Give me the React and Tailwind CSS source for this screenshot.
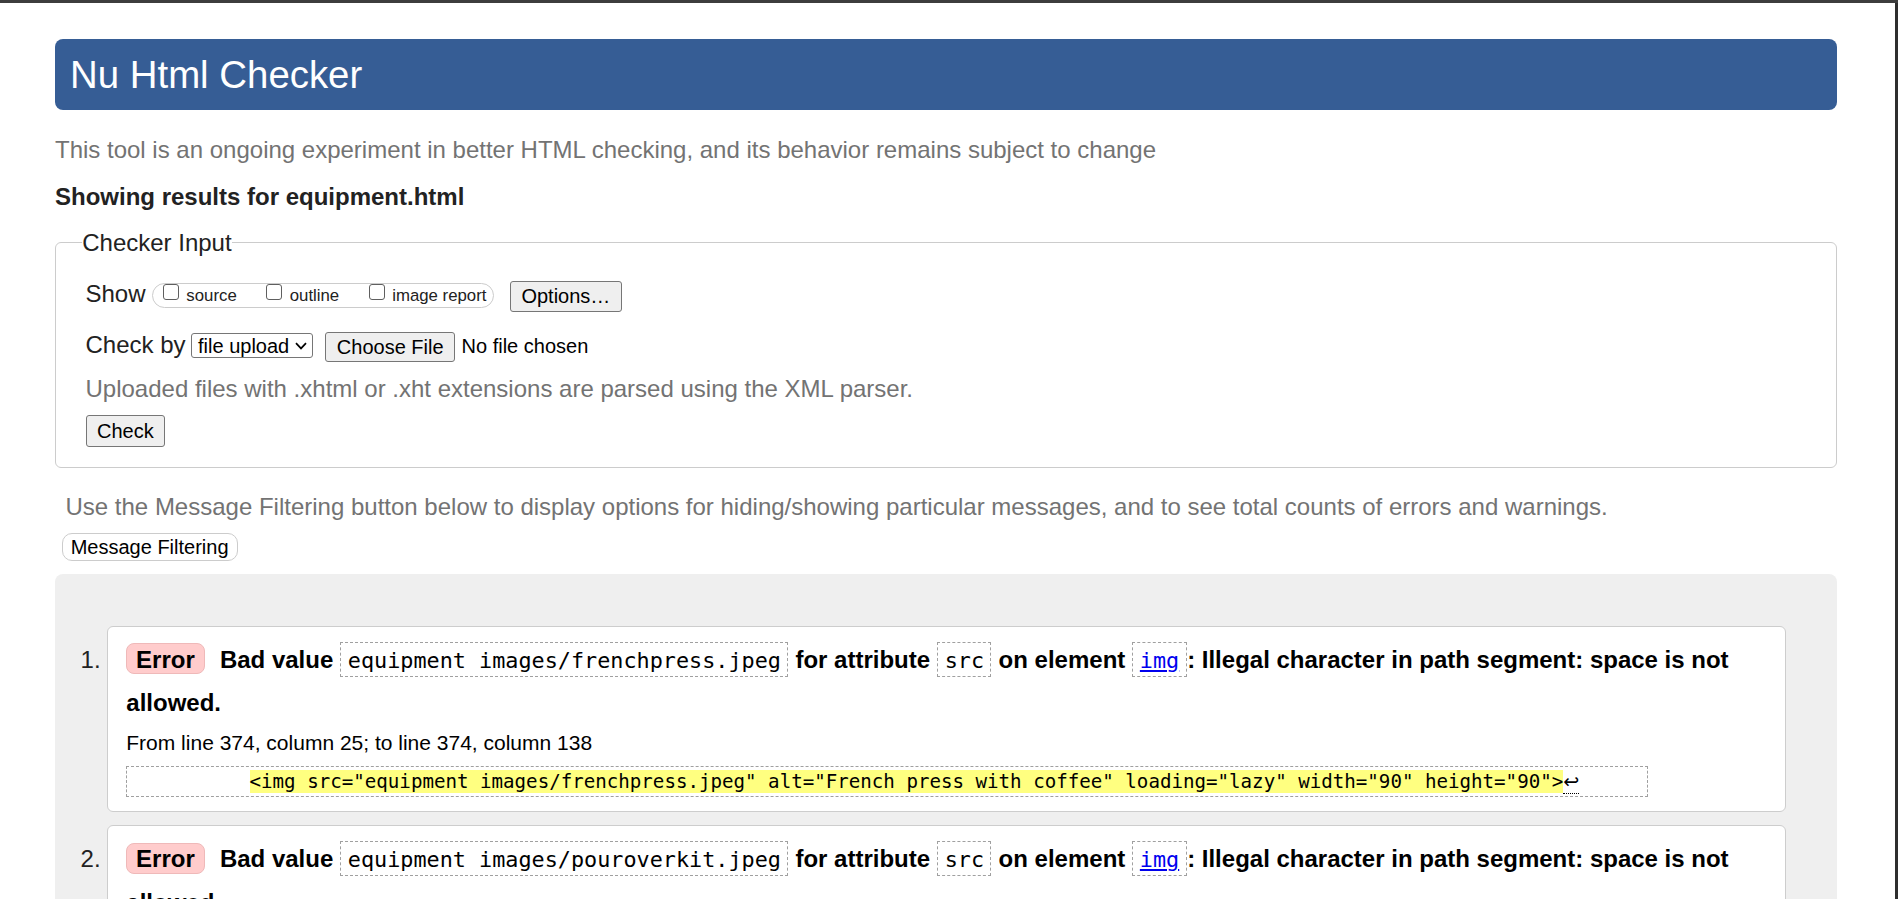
import React from 'react';

const Btn = ({ children, className = '' }) => (
  <button
    type="button"
    className={`flex items-center justify-center px-[10.5px] bg-[#efefef] border border-[#767676] rounded-[3px] text-[20px] leading-none text-black ${className}`}
  >
    {children}
  </button>
);

const Checkbox = ({ className = '' }) => (
  <span className={`block w-[16px] h-[16px] mt-[0.3px] shrink-0 bg-white border border-[#5f5f5f] rounded-[3px] ${className}`} />
);

const Code = ({ children }) => (
  <code className="inline-block mx-[0.5px] px-[6.4px] pt-[5px] pb-[3px] border border-dashed border-[#a0a0a0] font-['DejaVu_Sans_Mono',monospace] font-normal text-[21.8px] leading-[25px] text-black">
    {children}
  </code>
);

const Issue = ({ file, alt, line, from, to, className = '' }) => (
  <li className={`bg-white border border-[#cdcdcd] rounded-[6px] pl-[18px] pr-[18px] pt-[11px] pb-[13.6px] text-[#222] ${className}`}>
    <p className="text-[24px] leading-[43.4px] font-bold text-black">
      <span className="inline-block px-[8.8px] pt-[2.7px] pb-[0.3px] leading-[26px] bg-[#ffcccc] border border-[#efb9b9] rounded-[8px]">Error</span>
      <span className="ml-[15.3px]">Bad value</span>{' '}
      <Code>{file}</Code> for attribute <Code>src</Code> on element{' '}
      <Code>
        <a href="#" className="text-[#0000ee] underline">img</a>
      </Code>
      : Illegal character in path segment: space is not allowed.
    </p>
    <p className="mt-[5.3px] text-[21px] leading-[26px] text-black">
      From line {line}, column {from}; to line {line}, column {to}
    </p>
    <p className="mt-[9.6px] w-[1521.7px] pl-[7px] py-[3.35px] border border-dashed border-[#a0a0a0] font-['DejaVu_Sans_Mono',monospace] text-[19.15px] leading-[23px] text-black whitespace-pre">
      {'          '}
      <span className="bg-[#ffff80]">{`<img src="${file}" alt="${alt}" loading="lazy" width="90" height="90">`}</span>
      <span className="font-['DejaVu_Sans',sans-serif] border-b border-dotted border-black">↩</span>
    </p>
  </li>
);

export default function App() {
  return (
    <div className="h-[899px] overflow-hidden flex flex-col bg-white font-['Liberation_Sans',Arial,sans-serif] text-[24px] text-[#222]">
      <div className="h-[3px] shrink-0 bg-[#3d3d3d]" />
      <div className="flex flex-1 min-h-0">
        <main className="w-[1895px] shrink-0 pl-[55px] pr-[58px]">
          <h1 className="mt-[36px] h-[71px] pl-[15px] rounded-[8px] bg-[#365d95] text-[38.4px] leading-[71px] text-white">
            Nu Html Checker
          </h1>

          <p className="mt-[25px] leading-[30px] text-[#737373]">
            This tool is an ongoing experiment in better HTML checking, and its behavior remains subject to change
          </p>

          <p className="mt-[16.7px] leading-[30px] font-bold text-[#222]">Showing results for equipment.html</p>

          <fieldset className="mt-[16px] px-[29.5px] pt-[23px] pb-[20.6px] border border-[#cccccc] rounded-[6px]">
            <legend className="-ml-[3.3px] leading-[30px]">Checker Input</legend>

            <div className="flex items-start h-[31px]">
              <span className="mt-[0.7px] leading-[26px]">Show</span>
              <div className="ml-[6.8px] mt-[2px] h-[25.6px] flex items-start pl-[9.5px] pr-[6.5px] border border-[#cccccc] rounded-full">
                <Checkbox />
                <span className="ml-[7.5px] mt-[2.2px] text-[16.8px] leading-[20px]">source</span>
                <Checkbox className="ml-[29.5px]" />
                <span className="ml-[7.5px] mt-[2.2px] text-[16.8px] leading-[20px]">outline</span>
                <Checkbox className="ml-[29.5px]" />
                <span className="ml-[7.5px] mt-[2.2px] text-[16.8px] leading-[20px]">image report</span>
              </div>
              <Btn className="ml-[16px] h-[31px]">Options…</Btn>
            </div>

            <div className="mt-[20px] flex items-start h-[31px]">
              <span className="mt-[0.3px] leading-[26px]">Check by</span>
              <div className="ml-[5.2px] mt-[1.6px] h-[25px] w-[122.6px] flex items-center pl-[6.3px] pr-[5.6px] bg-white border border-[#767676] rounded-[3px] text-[20px] text-black">
                <span>file upload</span>
                <svg className="ml-auto" width="12" height="8" viewBox="0 0 12 8">
                  <path d="M1 1.2 L6 6.4 L11 1.2" fill="none" stroke="#000" strokeWidth="1.7" />
                </svg>
              </div>
              <Btn className="ml-[12px] h-[30.6px]">Choose File</Btn>
              <span className="ml-[6.5px] mt-[1.7px] text-[20px] leading-[26px] text-black">No file chosen</span>
            </div>

            <p className="mt-[11.3px] leading-[30px] text-[#737373]">
              Uploaded files with .xhtml or .xht extensions are parsed using the XML parser.
            </p>

            <Btn className="mt-[11px] h-[31.7px]">Check</Btn>
          </fieldset>

          <p className="mt-[23.4px] ml-[10.5px] leading-[30px] text-[#737373]">
            Use the Message Filtering button below to display options for hiding/showing particular messages, and to see total counts of errors and warnings.
          </p>

          <button
            type="button"
            className="mt-[11.6px] ml-[6.7px] h-[27.4px] px-[8px] flex items-center bg-white border border-[#cccccc] rounded-[10px] text-[20px] leading-none text-black"
          >
            Message Filtering
          </button>

          <div className="mt-[13.3px] pt-[52px] pl-[52.3px] pr-[51.2px] pb-[40px] bg-[#efefef] rounded-[8px]">
            <ol className="list-decimal list-outside">
              <Issue
                file="equipment images/frenchpress.jpeg"
                alt="French press with coffee"
                line={374}
                from={25}
                to={138}
              />
              <Issue
                className="mt-[13.4px]"
                file="equipment images/pouroverkit.jpeg"
                alt="Pour over coffee kit"
                line={385}
                from={25}
                to={136}
              />
            </ol>
          </div>
        </main>
        <div className="w-[3px] shrink-0 bg-[#2e2e2e]" />
      </div>
    </div>
  );
}
